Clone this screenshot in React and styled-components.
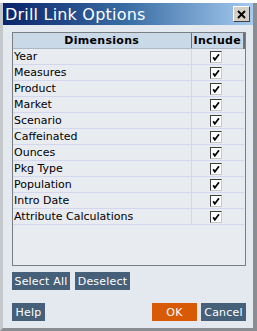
import React from 'react';
import styled, { createGlobalStyle } from 'styled-components';

const GlobalStyle = createGlobalStyle`
    html, body {
        margin: 0;
        padding: 0;
        background: #ffffff;
    }
    * {
        box-sizing: border-box;
    }
`;

const Frame = styled.div`
    width: 257px;
    height: 331px;
    padding-top: 3px;
    background: #ffffff;
    font-family: 'DejaVu Sans', Verdana, sans-serif;
`;

const Dialog = styled.div`
    height: 328px;
    display: flex;
    flex-direction: column;
    background: #e4e9ef;
    border-left: 3px solid #c4c8cc;
    border-right: 4px solid #8a8e92;
    border-bottom: 3px solid #8a8e92;
`;

const TitleBar = styled.div`
    height: 22px;
    display: flex;
    align-items: center;
    justify-content: space-between;
    padding: 0 3px 0 2px;
    background: linear-gradient(to right, #0a246a 0%, #3a6ea5 50%, #a6caf0 100%);

    .title {
        color: #ffffff;
        font-size: 16px;
        letter-spacing: 0.2px;
    }
`;

const CloseButton = styled.div`
    width: 17px;
    height: 16px;
    display: flex;
    align-items: center;
    justify-content: center;
    background: #d4d0c8;
    border: 1px solid;
    border-color: #ffffff #404040 #404040 #ffffff;
`;

const Body = styled.div`
    flex-grow: 1;
    display: flex;
    flex-direction: column;
    padding: 7px 7px 7px 9px;
`;

const TableBox = styled.div`
    height: 234px;
    border: 1px solid #7a7e82;
    background: #e8ebf0;
`;

const Table = styled.table`
    width: 100%;
    border-collapse: collapse;
    font-size: 11px;
    color: #000000;

    th {
        height: 15px;
        padding: 0;
        background: #c9d9e7;
        font-weight: bold;
        text-align: center;
        border-bottom: 1px solid #aeb8c4;
        letter-spacing: 0.3px;
    }

    th.include {
        width: 53px;
        border-left: 1px solid #6e7276;
        border-right: 2px solid #6e7276;
    }

    td {
        height: 16px;
        padding: 0 0 0 1px;
        border-bottom: 1px solid #d2d6ee;
    }

    td.include {
        border-left: 1px solid #d2d6ee;
        text-align: center;
        padding: 0 3px 0 0;
    }
`;

const CheckBox = styled.span`
    display: inline-flex;
    width: 12px;
    height: 12px;
    vertical-align: middle;
    align-items: center;
    justify-content: center;
    background: #ffffff;
    border: 1px solid;
    border-color: #404040 #c8c8c8 #c8c8c8 #404040;
`;

const ButtonRow = styled.div`
    display: flex;
    gap: ${props => props.gap || 5}px;
    margin-top: ${props => props.top}px;
`;

const Button = styled.div`
    height: 18px;
    width: ${props => props.w}px;
    display: flex;
    align-items: center;
    justify-content: center;
    background: ${props => (props.primary ? '#d85a05' : '#456078')};
    color: #ffffff;
    font-size: 11px;
    letter-spacing: 0.2px;
    white-space: nowrap;
    cursor: pointer;
`;

const Spacer = styled.div`
    flex-grow: 1;
`;

const dimensions = [
    'Year',
    'Measures',
    'Product',
    'Market',
    'Scenario',
    'Caffeinated',
    'Ounces',
    'Pkg Type',
    'Population',
    'Intro Date',
    'Attribute Calculations',
];

const Check = () => (
    <CheckBox>
        <svg width="8" height="8" viewBox="0 0 8 8">
            <path d="M1.2 4.2 L2.8 6.8 L7 1.2" stroke="#000" strokeWidth="1.7" fill="none" />
        </svg>
    </CheckBox>
);

const App = () => {
    return (
        <Frame>
            <GlobalStyle />
            <Dialog>
                <TitleBar>
                    <span className="title">Drill Link Options</span>
                    <CloseButton>
                        <svg width="9" height="9" viewBox="0 0 9 9">
                            <path d="M1 1 L8 8 M8 1 L1 8" stroke="#000" strokeWidth="1.8" />
                        </svg>
                    </CloseButton>
                </TitleBar>
                <Body>
                    <TableBox>
                        <Table>
                            <thead>
                                <tr>
                                    <th>Dimensions</th>
                                    <th className="include">Include</th>
                                </tr>
                            </thead>
                            <tbody>
                                {dimensions.map(name => (
                                    <tr key={name}>
                                        <td>{name}</td>
                                        <td className="include"><Check /></td>
                                    </tr>
                                ))}
                            </tbody>
                        </Table>
                    </TableBox>
                    <ButtonRow top={6}>
                        <Button w={58}>Select All</Button>
                        <Button w={55}>Deselect</Button>
                    </ButtonRow>
                    <ButtonRow top={13} gap={4}>
                        <Button w={33}>Help</Button>
                        <Spacer />
                        <Button primary w={45}>OK</Button>
                        <Button w={45}>Cancel</Button>
                    </ButtonRow>
                </Body>
            </Dialog>
        </Frame>
    );
};

export default App;
